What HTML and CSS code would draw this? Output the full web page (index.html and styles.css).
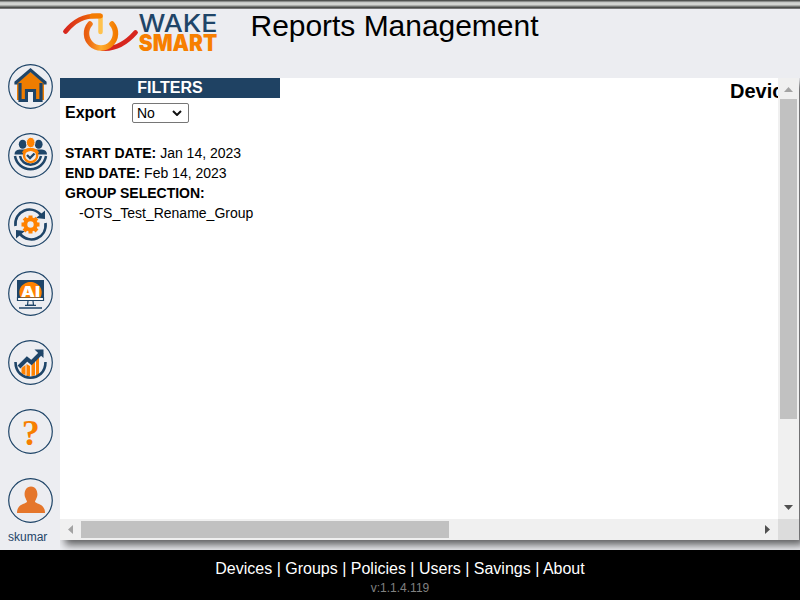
FILE: index.html
```html
<!DOCTYPE html>
<html lang="en">
<head>
<meta charset="utf-8">
<title>Reports Management</title>
<link rel="stylesheet" href="styles.css">
</head>
<body>
<div class="topbar"></div>
<div class="app">
  <nav class="side">
    <svg class="icon" viewBox="0 0 45 45"><circle class="ring" cx="22.5" cy="22.5" r="21.8"/><path fill="#ef7d00" d="M22.500 8 36 19v17H9V19z"/><path class="navyline" stroke-width="3.200" d="M8 20.500v-2L22.500 6 37 18.500v2M12 19v17.500h6.500V26.500h8v10H33V19"/><path fill="#ecedf1" d="M20 28h5v10.500h-5z"/></svg>
    <svg class="icon" viewBox="0 0 45 45"><circle class="ring" cx="22.5" cy="22.5" r="21.8"/><g class="navy"><ellipse cx="14.7" cy="11.3" rx="3.9" ry="4.500"/><ellipse cx="30.7" cy="11.3" rx="3.900" ry="4.500"/><path d="M6.500 21.500q0-4.500 5-5h7.500v5zM39 21.500q0-4.500-5-5h-7.500v5z"/></g><path class="navyline" stroke-width="2.500" d="M12 23a10.700 10.700 0 0 0 21 0M7 23a15.700 15.700 0 0 0 31 0"/><ellipse cx="22.700" cy="9.500" rx="4.300" ry="5.200" fill="#ff8200" stroke="#ecedf1"/><circle cx="22.600" cy="22.500" r="6.600" fill="#ecedf1" stroke="#ff8200" stroke-width="2.400"/><path fill="#ff8200" d="M14 20q1-4 5-4.500h7q4 .5 5 4.500l-4-.5q-4-3-9 0z"/><path class="navyline" stroke-width="2.300" d="m19 22 3 3 4.500-4.500"/></svg>
    <svg class="icon" viewBox="0 0 45 45"><circle class="ring" cx="22.500" cy="22.500" r="21.8"/><path class="navyline" stroke-width="2.700" d="M7.500 24C6 9 23 2 33 13M37.500 21C39 36 22 43 12 32"/><path class="navy" d="M37 8.500v8.500l-9-1zM8 36.500V28l9 1z"/><circle cx="22.500" cy="22.500" r="5.200" fill="none" stroke="#ff8200" stroke-width="4"/><path d="M22.500 13.500v4M22.500 27.500v4M13.500 22.500h4M27.500 22.500h4M16.100 16.100l3 3M26 26l3 3M28.900 16.100l-3 3M19 26l-3 3" stroke="#ff8200" stroke-width="4"/></svg>
    <svg class="icon" viewBox="0 0 45 45"><circle class="ring" cx="22.500" cy="22.500" r="21.8"/><path class="navy" d="M9 9h27v18H9z"/><path fill="#ff8200" d="M12.500 26.500C8.500 18 15 11 22.500 11S36.500 18 32.500 26.500z"/><path fill="#fff" d="M9 27h27v2.500H9z"/><path class="navyline" stroke-width="1.200" d="M9.500 26v3.500h26V26M20 30l-.5 4h6l-.5-4M17 34.300h11"/><path class="navyline" stroke-width="1.500" d="M11 37h23"/><text x="13" y="25.500" textLength="19" lengthAdjust="spacingAndGlyphs" class="ai">AI</text></svg>
    <svg class="icon" viewBox="0 0 45 45"><circle class="ring" cx="22.500" cy="22.500" r="21.8"/><path fill="#ff8200" d="M13.500 28l4-3v10l-4-1.500zM18.500 24l3.500 2v10h-3.500zM23.500 25l3.500-4v14.500l-3.500.5zM28 20l3-4v18.500l-3 1z"/><path class="navyline" stroke-width="4" d="m11 27 8-8 4.500 3.500L34 12"/><path class="navy" d="M26.500 9.500h9v8.500z"/><path class="navyline" stroke-width="2.600" d="M7.500 22c0 21 30 21 30 0"/></svg>
    <svg class="icon" viewBox="0 0 45 45"><circle class="ring" cx="22.500" cy="22.500" r="21.8"/><text class="help" x="22.800" y="35.500">?</text></svg>
    <svg class="icon" viewBox="0 0 45 45"><circle class="ring" cx="22.500" cy="22.500" r="21.8"/><path fill="#e5762b" d="M17.500 20c-2-3-1-11.500 5.500-11.500S30.500 17 28.500 20c-.5 2-1.500 2.500-1.500 4 3.500 2.500 10 2.500 10 11H9c0-8.500 6.500-8.500 10-11 0-1.500-1-2-1.500-4z"/></svg>
    <div class="user">skumar</div>
  </nav>
  <main>
    <header>
      <svg class="logo" viewBox="0 0 158 52">
        <defs>
          <linearGradient id="g1"><stop offset="0" stop-color="#d7261e"/><stop offset="1" stop-color="#f47c00"/></linearGradient>
          <linearGradient id="g3"><stop offset="0" stop-color="#e95d0f"/><stop offset=".5" stop-color="#ffac2e"/><stop offset="1" stop-color="#f37b00"/></linearGradient>
        </defs>
        <path d="M3.500 20.500C12 10 22 4 38 5" stroke="url(#g1)"/>
        <path d="M40 37.500c13 1 23-4 33.500-16" stroke="#d7261e"/>
        <path d="M28 13a14.500 14.500 0 1 0 22 0" stroke="url(#g3)" stroke-width="5.500"/>
        <path d="M38.500 6v15" stroke="#ffc24d" stroke-width="4.500"/><path d="M30 5h8.500" stroke="#f47c00"/>
        <text class="wake" x="76.500" y="21" textLength="79" lengthAdjust="spacingAndGlyphs">WAKE</text>
        <text class="smart" x="76.800" y="39.800" textLength="78.500" lengthAdjust="spacingAndGlyphs">SMART</text>
      </svg>
      <h1>Reports Management</h1>
    </header>
    <section class="frame">
      <div class="view">
        <div class="filters">
          <h2>FILTERS</h2>
          <div class="export"><b>Export</b><span class="select">No<svg viewBox="0 0 10 6"><path d="m1 1 4 4 4-4"/></svg></span></div>
          <div class="criteria">
            <div><b>START DATE:</b> Jan 14, 2023</div>
            <div><b>END DATE:</b> Feb 14, 2023</div>
            <div><b>GROUP SELECTION:</b></div>
            <div class="group">-OTS_Test_Rename_Group</div>
          </div>
        </div>
        <h3>Devices</h3>
      </div>
      <div class="vbar"><svg class="arrow" viewBox="0 0 21 21"><path fill="#a3a3a3" d="m6 14 4.500-5 4.500 5z"/></svg><i></i><svg class="arrow" viewBox="0 0 21 21"><path fill="#505050" d="m6 7 4.500 5L15 7z"/></svg></div>
      <div class="hbar"><svg class="arrow" viewBox="0 0 21 21"><path fill="#a3a3a3" d="m13 6-5 4.500 5 4.500z"/></svg><i></i><svg class="arrow" viewBox="0 0 21 21"><path fill="#505050" d="m8 6 5 4.500L8 15z"/></svg></div>
      <div class="corner"></div>
    </section>
  </main>
</div>
<footer>
  <div class="links">Devices | Groups | Policies | Users | Savings | About</div>
  <div class="version">v:1.1.4.119</div>
</footer>
</body>
</html>
```
FILE: styles.css
```css
* { box-sizing: border-box; }
body { margin: 0; width: 800px; height: 600px; overflow: hidden; background: #ecedf1; color: #000; font-family: "Liberation Sans", Arial, sans-serif; }
svg { display: block; fill: none; }
h1, h2, h3 { margin: 0; }
.topbar { height: 9px; background: linear-gradient(#505250 0 1px, #8b8d8b 1px 2px, #c5c7c5 2px 3px, #d1d3d0 3px 5px, #aaaca9 5px 6px, #777976 6px 7px, #4b4d4b 7px 8px, #777 8px); }
.app { display: flex; height: 541px; overflow: hidden; }
.side { width: 60px; padding: 55px 0 0 8px; }
.icon { width: 45px; height: 45px; margin-bottom: 24px; }
.ring { fill: none; stroke: #1f4568; stroke-width: 1.2; }
.navy { fill: #1f4568; }
.navyline { stroke: #1f4568; }
.ai { font: 900 14px Inter, sans-serif; fill: #fff; }
.help { font: bold 36px "Liberation Serif", serif; fill: #f77f00; text-anchor: middle; }
.user { margin-top: -18px; font-size: 12px; line-height: 16px; color: #1f4568; }
main { width: 740px; }
header { display: flex; height: 69px; }
.logo { flex: none; width: 158px; height: 52px; margin: 2px 0 0 2px; stroke-width: 4.8; stroke-linecap: round; }
.logo text { stroke: none; }
.wake { font: 500 24.500px Inter, sans-serif; fill: #1f4568; }
.smart { font: 900 22.500px Inter, sans-serif; fill: #f77f00; }
h1 { margin-left: 30.500px; font-size: 30px; font-weight: 400; line-height: 34px; letter-spacing: -.03px; white-space: nowrap; }
.frame { display: grid; grid-template: 441px 21px / 718px 21px; width: 739px; background: #fff; clip-path: inset(0 -10px -10px 0); box-shadow: 5px 5px 8px rgba(0,0,0,.6); }
.view { display: flex; overflow: hidden; }
.filters { width: 220px; flex: none; }
h2 { height: 20px; background: #1f4263; color: #fff; text-align: center; font-size: 16px; line-height: 19px; }
.export { display: flex; height: 30px; align-items: center; padding: 0 0 0 5px; font-size: 16px; }
.export b { width: 67px; }
.select { display: flex; justify-content: space-between; align-items: center; width: 57px; height: 20px; border: 1px solid #767676; border-radius: 2px; padding: 0 6px 0 4px; font-size: 14px; }
.select svg { width: 10px; height: 6px; stroke: #111; stroke-width: 2; }
.criteria { padding: 15px 0 0 5px; font-size: 14px; line-height: 20px; white-space: nowrap; }
.group { padding-left: 14px; }
h3 { margin: 1px 0 0 450px; font-size: 20px; line-height: 24px; }
.vbar, .hbar { display: flex; background: #f0f0f0; }
.vbar { flex-direction: column; }
.arrow { width: 21px; height: 21px; flex: none; }
.vbar i { height: 320px; margin: 0 2px auto; background: #c1c1c1; }
.hbar i { width: 368px; margin: 2px auto 2px 0; background: #c1c1c1; }
.corner { background: #dcdcdc; }
footer { height: 50px; padding-top: 9px; background: #000; text-align: center; color: #fff; }
.links { font-size: 16px; line-height: 20px; }
.version { font-size: 12px; line-height: 19px; color: #808080; }
```
